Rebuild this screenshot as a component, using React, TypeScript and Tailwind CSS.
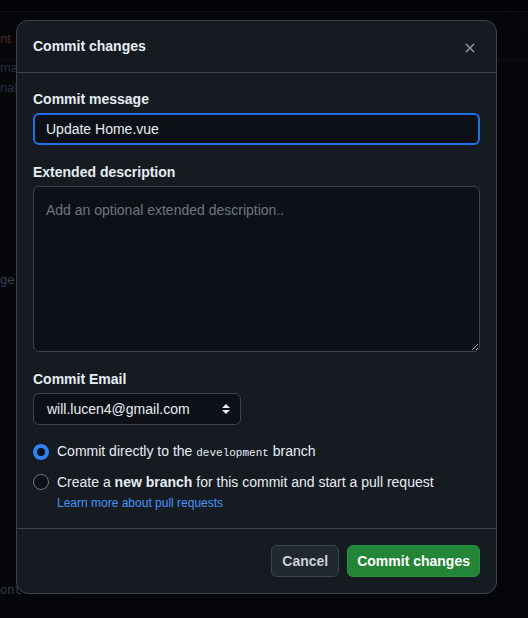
import React from "react";

const FONT = { fontFamily: '"Liberation Sans", Arial, sans-serif' };

function CloseIcon() {
  return (
    <svg width="16" height="16" viewBox="0 0 16 16" fill="currentColor">
      <path d="M3.72 3.72a.75.75 0 0 1 1.06 0L8 6.94l3.22-3.22a.749.749 0 0 1 1.275.326.749.749 0 0 1-.215.734L9.06 8l3.22 3.22a.749.749 0 0 1-.326 1.275.749.749 0 0 1-.734-.215L8 9.06l-3.22 3.22a.751.751 0 0 1-1.042-.018.751.751 0 0 1-.018-1.042L6.94 8 3.72 4.78a.75.75 0 0 1 0-1.06Z" />
    </svg>
  );
}

function SelectArrows() {
  return (
    <svg width="10" height="14" viewBox="0 0 10 14" fill="currentColor">
      <path d="M5 2 9 6H1Z" />
      <path d="M5 12 1 8h8Z" />
    </svg>
  );
}

export default function App() {
  return (
    <div className="relative h-[618px] w-[528px] overflow-hidden bg-[#05070b]" style={FONT}>
      {/* ── Page behind the dialog ── */}
      <div className="h-[12px] border-b border-[#0e1218] bg-[#010306]" />
      <div className="flex flex-col text-[13px] text-[#2a3340]">
        <div className="h-[48px] border-b border-[#0d1116] pl-0 pt-[17px]">
          <span className="text-[#5a2525]">nt</span>
        </div>
        <span className="-mt-[2px] h-[20px]">mab</span>
        <span className="h-[20px]">nab</span>
        <span className="mt-[172px] text-[#3a4450]">ge`</span>
        <span className="mt-[292px] text-[12px] text-[#3a4450]" style={{ fontFamily: '"Liberation Mono", monospace' }}>
          ont
        </span>
      </div>

      {/* ── Dialog ── */}
      <div className="absolute left-[16px] top-[20px] flex w-[481px] flex-col rounded-[12px] border border-[#3d444d] bg-[#161b22] shadow-2xl">
        {/* Header */}
        <div className="flex h-[52px] items-center justify-between border-b border-[#3d444d] pl-[16px] pr-[16px]">
          <h2 className="text-[14px] font-bold text-[#e6edf3]">Commit changes</h2>
          <button type="button" className="flex h-[20px] w-[20px] items-center justify-center pt-[3px] text-[#8b949e]">
            <CloseIcon />
          </button>
        </div>

        {/* Body */}
        <div className="flex flex-col px-[16px] pb-[16px] pt-[16px]">
          <label className="h-[20px] text-[14px] font-bold leading-[20px] text-[#e6edf3]">Commit message</label>
          <input
            readOnly
            value="Update Home.vue"
            className="mt-[4px] h-[32px] w-full rounded-[6px] border-2 border-[#1f6feb] bg-[#0d1117] px-[11px] text-[14px] text-[#e6edf3] outline-none"
          />

          <label className="mt-[17px] h-[20px] text-[14px] font-bold leading-[20px] text-[#e6edf3]">Extended description</label>
          <textarea
            placeholder="Add an optional extended description.."
            className="mt-[4px] h-[166px] w-full rounded-[6px] border border-[#3d444d] bg-[#0d1117] px-[12px] pb-[8px] pt-[13px] text-[14px] leading-[20px] text-[#e6edf3] outline-none placeholder:text-[#6e7681]"
          />

          <label className="mt-[17px] h-[20px] text-[14px] font-bold leading-[20px] text-[#e6edf3]">Commit Email</label>
          <div className="mt-[4px] flex h-[32px] w-[208px] items-center justify-between rounded-[6px] border border-[#3d444d] bg-[#0d1117] pl-[13px] pr-[9px] text-[14px] text-[#e6edf3]">
            <span>will.lucen4@gmail.com</span>
            <span className="text-[#e6edf3]">
              <SelectArrows />
            </span>
          </div>

          <div className="mt-[17px] flex flex-col gap-[10px]">
            <div className="flex h-[20px] items-center gap-[8px]">
              <span className="h-[16px] w-[16px] rounded-full border-[4px] border-[#2f81f7] bg-[#0d1117]" />
              <span className="text-[14px] leading-[20px] text-[#e6edf3]">
                Commit directly to the{" "}
                <code className="text-[11px]" style={{ fontFamily: '"Liberation Mono", monospace' }}>
                  development
                </code>{" "}
                branch
              </span>
            </div>
            <div className="flex flex-col">
              <div className="flex h-[20px] items-center gap-[8px]">
                <span className="h-[16px] w-[16px] rounded-full border border-[#6e7681] bg-[#0d1117]" />
                <span className="text-[14px] leading-[20px] text-[#e6edf3]">
                  Create a <b>new branch</b> for this commit and start a pull request
                </span>
              </div>
              <a className="ml-[24px] mt-[2px] text-[12px] leading-[18px] text-[#4493f8]">Learn more about pull requests</a>
            </div>
          </div>
        </div>

        {/* Footer */}
        <div className="flex justify-end gap-[8px] border-t border-[#3d444d] p-[16px]">
          <button
            type="button"
            className="h-[32px] rounded-[6px] border border-[#3d444d] bg-[#212830] px-[10px] text-[14px] font-bold text-[#c9d1d9]"
          >
            Cancel
          </button>
          <button
            type="button"
            className="h-[32px] rounded-[6px] border border-[#2b9140] bg-[#238636] px-[9px] text-[14px] font-bold text-white"
          >
            Commit changes
          </button>
        </div>
      </div>
    </div>
  );
}
